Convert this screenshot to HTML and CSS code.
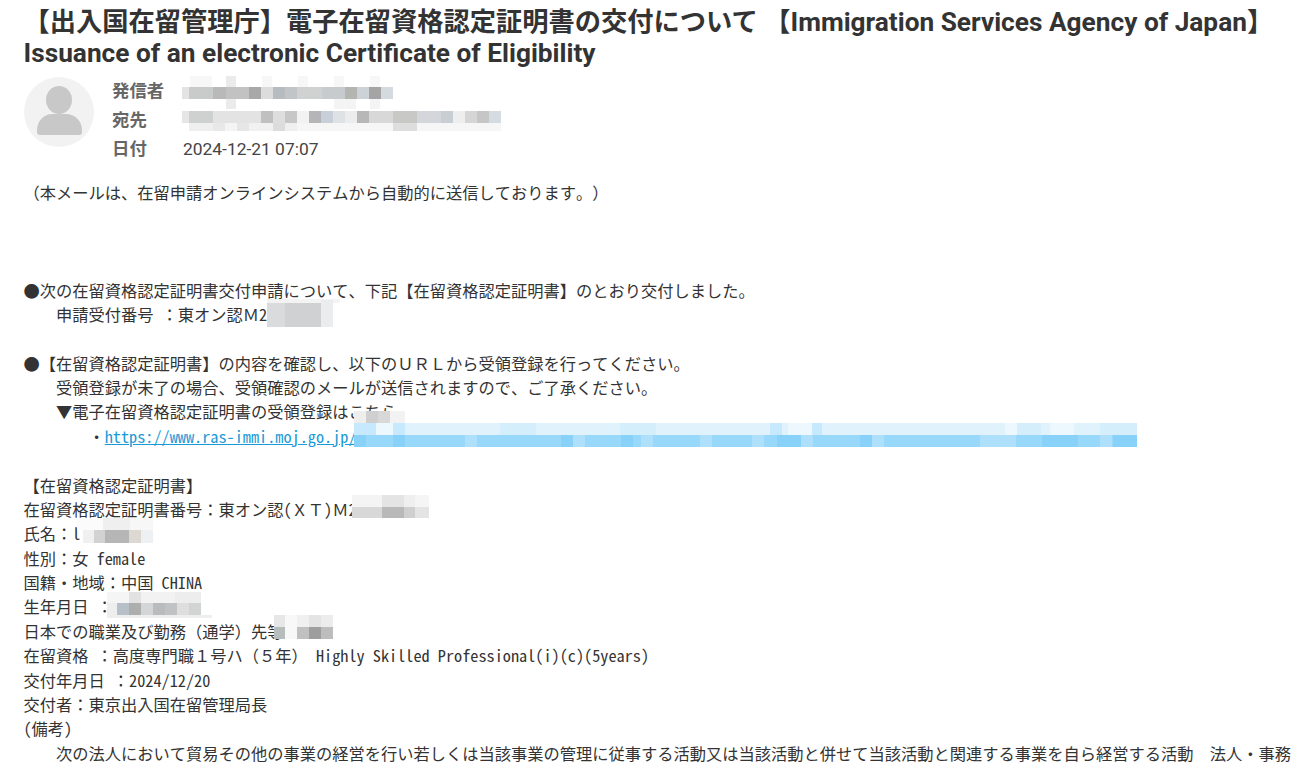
FILE: index.html
```html
<!DOCTYPE html>
<html lang="ja">
<head>
<meta charset="utf-8">
<title>Mail</title>
<link rel="stylesheet" href="styles.css">
</head>
<body>
<h1 class="subject">【出入国在留管理庁】電子在留資格認定証明書の交付について 【Immigration Services Agency of Japan】 Issuance of an electronic Certificate of Eligibility</h1>
<div class="head">
<svg class="avatar" viewBox="0 0 70 70"><circle cx="35" cy="35" r="35" fill="#f2f2f2"/><ellipse cx="35" cy="23" rx="13" ry="14" fill="#c8c8c8"/><path d="M13 53c0-9 7-16 15-16h14c9 0 16 7 16 16v2q0 3-3 3H16q-3 0-3-3z" fill="#c8c8c8"/></svg>
<dl class="meta">
<dt>発信者</dt><dd>&nbsp;</dd>
<dt>宛先</dt><dd>&nbsp;</dd>
<dt>日付</dt><dd>2024-12-21 07:07</dd>
</dl>
</div>
<div class="body">
<p>（本メールは、在留申請オンラインシステムから自動的に送信しております。）</p>
<p>&nbsp;</p>
<p>&nbsp;</p>
<p>&nbsp;</p>
<p>●次の在留資格認定証明書交付申請について、下記【在留資格認定証明書】のとおり交付しました。</p>
<p class="i1">申請受付番号 ：東オン認Ｍ2</p>
<p>&nbsp;</p>
<p>●【在留資格認定証明書】の内容を確認し、以下のＵＲＬから受領登録を行ってください。</p>
<p class="i1">受領登録が未了の場合、受領確認のメールが送信されますので、ご了承ください。</p>
<p class="i1">▼電子在留資格認定証明書の受領登録はこちら</p>
<p class="i2">・<a href="#">https://www.ras-immi.moj.go.jp/</a></p>
<p>&nbsp;</p>
<p>【在留資格認定証明書】</p>
<p>在留資格認定証明書番号：東オン認(ＸＴ)Ｍ2</p>
<p>氏名：l</p>
<p>性別：女 female</p>
<p>国籍・地域：中国 CHINA</p>
<p>生年月日 ：</p>
<p>日本での職業及び勤務（通学）先等</p>
<p>在留資格 ：高度専門職１号ハ（５年） Highly Skilled Professional(i)(c)(5years)</p>
<p>交付年月日 ：2024/12/20</p>
<p>交付者：東京出入国在留管理局長</p>
<p>(備考)</p>
<p class="i1 nowrap">次の法人において貿易その他の事業の経営を行い若しくは当該事業の管理に従事する活動又は当該活動と併せて当該活動と関連する事業を自ら経営する活動　法人・事務</p>
</div>
<svg class="mosaic" viewBox="0 0 1302 769" aria-hidden="true">
<g class="soft">
<!-- sender -->
<path fill="#f7f7f7" d="M190 76h22v11h-22zM262 76h10v11h-10zM298 76h10v11h-10zM334 76h10v11h-10zM370 76h10v11h-10z"/>
<path fill="#ebebeb" d="M226 76h10v11h-10zM226 99h10v10h-10z"/>
<path fill="#f4f4f4" d="M334 99h22v10h-22zM370 99h10v10h-10z"/>
<rect x="182" y="87" width="7" height="12" fill="#e3e3e3"/><rect x="189" y="87" width="24" height="12" fill="#c9caca"/><rect x="213" y="87" width="13" height="12" fill="#b9b9ba"/><rect x="226" y="87" width="23" height="12" fill="#c2c2c2"/><rect x="249" y="87" width="12" height="12" fill="#a8a8a8"/><rect x="261" y="87" width="12" height="12" fill="#dcdcdc"/><rect x="273" y="87" width="12" height="12" fill="#b7bcc1"/><rect x="285" y="87" width="12" height="12" fill="#c2c5c7"/><rect x="297" y="87" width="25" height="12" fill="#d0d1d1"/><rect x="322" y="87" width="23" height="12" fill="#c8cbcd"/><rect x="345" y="87" width="12" height="12" fill="#b4b4b0"/><rect x="357" y="87" width="12" height="12" fill="#cdd2d9"/><rect x="369" y="87" width="12" height="12" fill="#a4a4a4"/><rect x="381" y="87" width="12" height="12" fill="#d5dae0"/>
<!-- recipient -->
<rect x="182" y="111" width="7" height="12" fill="#e6e6e6"/><rect x="189" y="111" width="24" height="12" fill="#cfd0d0"/><rect x="213" y="111" width="48" height="12" fill="#e3e3e3"/><rect x="261" y="111" width="12" height="12" fill="#c0c0c0"/><rect x="273" y="111" width="12" height="12" fill="#dedede"/><rect x="285" y="111" width="12" height="12" fill="#c7c7c7"/><rect x="297" y="111" width="12" height="12" fill="#f2f2f2"/><rect x="309" y="111" width="12" height="12" fill="#b5b5b7"/><rect x="321" y="111" width="12" height="12" fill="#c7cfd8"/><rect x="333" y="111" width="12" height="12" fill="#dfe2e4"/><rect x="345" y="111" width="12" height="12" fill="#ececec"/><rect x="357" y="111" width="12" height="12" fill="#b7b7b7"/><rect x="369" y="111" width="24" height="12" fill="#d8d8d8"/><rect x="393" y="111" width="24" height="12" fill="#c8c8c7"/><rect x="417" y="111" width="24" height="12" fill="#d3d7db"/><rect x="441" y="111" width="12" height="12" fill="#c9ced3"/><rect x="453" y="111" width="12" height="12" fill="#eeeeee"/><rect x="465" y="111" width="12" height="12" fill="#d5d5d5"/><rect x="477" y="111" width="12" height="12" fill="#c6c6c6"/><rect x="489" y="111" width="12" height="12" fill="#d5dbe0"/>
<rect x="189" y="123" width="24" height="8" fill="#efefef"/><rect x="213" y="123" width="12" height="8" fill="#e8e8e8"/><rect x="225" y="123" width="12" height="8" fill="#f4f4f4"/><rect x="237" y="123" width="12" height="8" fill="#e6e6e6"/><rect x="249" y="123" width="24" height="8" fill="#f1f1f1"/><rect x="273" y="123" width="12" height="8" fill="#dcdcdc"/><rect x="285" y="123" width="12" height="8" fill="#efefef"/><rect x="297" y="123" width="96" height="8" fill="#f6f6f6"/><rect x="393" y="123" width="24" height="8" fill="#dedede"/><rect x="417" y="123" width="84" height="8" fill="#f6f6f6"/>
<!-- application number -->
<rect x="267" y="299" width="73" height="4" fill="#f3f3f3"/><rect x="267" y="303" width="18" height="24" fill="#dadbdc"/><rect x="285" y="303" width="36" height="24" fill="#d0d1d3"/><rect x="321" y="300" width="12" height="27" fill="#ebecee"/>
<!-- "here" patch and link -->
<rect x="354" y="411" width="12" height="12" fill="#eeeeee"/><rect x="366" y="411" width="12" height="12" fill="#cfcfcf"/><rect x="378" y="411" width="12" height="12" fill="#d8d8d8"/><rect x="390" y="411" width="15" height="12" fill="#f2f2f2"/>
<rect x="354" y="423" width="783" height="12" fill="#e0f3fd"/><rect x="354" y="435" width="783" height="12" fill="#98d9fb"/>
<path fill="#c6e9fd" d="M354 423h22v12h-22zM393 423h12v12h-12zM770 423h12v12h-12zM812 423h10v12h-10z"/>
<path fill="#ecf8fe" d="M376 423h17v12h-17zM788 423h24v12h-24zM1005 423h12v12h-12zM1050 423h24v12h-24z"/>
<path fill="#d5eefc" d="M500 423h36v12h-36zM620 423h36v12h-36zM1017 423h24v12h-24zM1100 423h37v12h-37z"/>
<path fill="#88d2fa" d="M354 435h12v12h-12zM393 435h12v12h-12zM561 435h12v12h-12zM621 435h12v12h-12zM777 435h24v12h-24zM860 435h12v12h-12zM1042 435h36v12h-36zM1113 435h24v12h-24z"/>
<path fill="#aee0fc" d="M465 435h12v12h-12zM573 435h12v12h-12zM641 435h12v12h-12zM700 435h12v12h-12zM752 435h12v12h-12zM801 435h12v12h-12zM872 435h12v12h-12zM980 435h36v12h-36zM1100 435h12v12h-12z"/>
<!-- certificate number -->
<rect x="352" y="495" width="30" height="12" fill="#f4f4f4"/><rect x="382" y="495" width="22" height="12" fill="#e4e4e4"/><rect x="404" y="495" width="11" height="12" fill="#efefef"/><rect x="415" y="495" width="14" height="12" fill="#f5f5f5"/>
<rect x="352" y="507" width="30" height="11" fill="#d8d8d8"/><rect x="382" y="507" width="22" height="11" fill="#b9b9b9"/><rect x="404" y="507" width="11" height="11" fill="#cfcfcf"/><rect x="415" y="507" width="14" height="11" fill="#e4e4e4"/>
<!-- name -->
<rect x="77" y="518" width="26" height="12" fill="#fbfbfb"/><rect x="103" y="518" width="27" height="12" fill="#efefef"/><rect x="130" y="518" width="23" height="12" fill="#f7f7f7"/>
<rect x="83" y="530" width="11" height="13" fill="#f0f0f0"/><rect x="94" y="530" width="11" height="13" fill="#d2d2d2"/><rect x="105" y="530" width="24" height="13" fill="#b6b6b6"/><rect x="129" y="530" width="12" height="13" fill="#ddd9d2"/><rect x="141" y="530" width="12" height="13" fill="#eef1f3"/>
<!-- birth date -->
<rect x="107" y="592" width="22" height="11" fill="#f5f5f5"/><rect x="129" y="592" width="12" height="11" fill="#e2e2e2"/><rect x="141" y="592" width="34" height="11" fill="#f2f2f2"/><rect x="175" y="592" width="26" height="11" fill="#ededed"/>
<rect x="107" y="603" width="10" height="12" fill="#eeeeee"/><rect x="117" y="603" width="12" height="12" fill="#b7c0c8"/><rect x="129" y="603" width="12" height="12" fill="#adafaf"/><rect x="141" y="603" width="12" height="12" fill="#d3d5d6"/><rect x="153" y="603" width="12" height="12" fill="#b9bbbc"/><rect x="165" y="603" width="12" height="12" fill="#c0c3c4"/><rect x="177" y="603" width="12" height="12" fill="#dedede"/><rect x="189" y="603" width="12" height="12" fill="#d2d3d3"/>
<rect x="107" y="615" width="105" height="3" fill="#eeeeee"/>
<!-- employer -->
<rect x="274" y="615" width="11" height="12" fill="#e7e7e7"/><rect x="285" y="615" width="12" height="24" fill="#f8f8f8"/><rect x="297" y="615" width="12" height="12" fill="#f0f0f0"/><rect x="309" y="615" width="12" height="12" fill="#e4e4e4"/><rect x="321" y="615" width="12" height="12" fill="#ececec"/>
<rect x="274" y="627" width="11" height="12" fill="#b7bcbc"/><rect x="297" y="627" width="12" height="12" fill="#c0c0c0"/><rect x="309" y="627" width="12" height="12" fill="#9e9e9e"/><rect x="321" y="627" width="12" height="12" fill="#bdbdbd"/>
</g>
</svg>
</body>
</html>
```
FILE: styles.css
```css
html,body{margin:0;padding:0;background:#fff;}
body{width:1302px;height:769px;overflow:hidden;position:relative;color:#333;font-family:Roboto,"Noto Sans CJK JP",sans-serif;}
.subject{margin:0;padding:7px 24px 0 23.5px;font-size:26.25px;line-height:31px;font-weight:700;color:#333;}
.head{display:flex;gap:18px;padding:8px 24px 0;}
.avatar{width:70px;height:70px;flex:none;}
.meta{margin:0;display:grid;grid-template-columns:71px 1fr;grid-auto-rows:29px;font-size:17.4px;line-height:29px;align-self:flex-start;}
.meta dt{font-weight:700;color:#666;}
.meta dd{margin:0;color:#444;}
.body{padding:16px 24px 0 23.5px;font-family:"Noto Sans Mono CJK JP","Noto Sans CJK JP",monospace;font-size:16.25px;line-height:24.37px;color:#333;text-spacing-trim:space-all;}
.body p{margin:0;white-space:pre-wrap;}
.i1{padding-left:2em;}
.i2{padding-left:4em;}
.body .nowrap{white-space:nowrap;}
a{color:#1a9ad6;}
.mosaic{position:absolute;left:0;top:0;width:1302px;height:769px;pointer-events:none;}
.soft{filter:blur(.6px);}
```
